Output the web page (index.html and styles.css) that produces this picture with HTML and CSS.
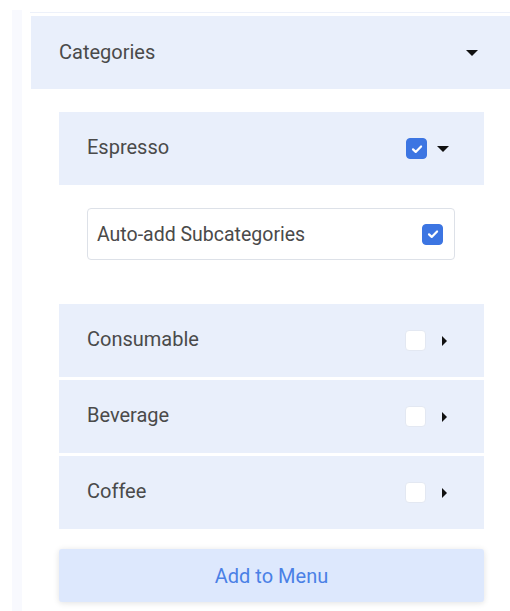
FILE: index.html
```html
<!DOCTYPE html>
<html lang="en">
<head>
    <meta charset="UTF-8">
    <meta name="viewport" content="width=device-width, initial-scale=1.0">
    <title>Categories</title>
    <link rel="stylesheet" href="styles.css">
</head>
<body>
    <div class="page">
        <div class="strip"></div>
        <div class="panel">
            <div class="section-head">
                <span>Categories</span>
                <span class="caret-down"></span>
            </div>
            <div class="section-body">
                <div class="cat-row">
                    <span>Espresso</span>
                    <div class="controls">
                        <span class="check checked"><svg viewBox="0 0 12 12" width="14" height="14"><path d="M2.6 6.3l2.3 2.2 4.6-4.7" fill="none" stroke="#fff" stroke-width="1.9" stroke-linecap="round" stroke-linejoin="round"/></svg></span>
                        <span class="caret-down"></span>
                    </div>
                </div>
                <div class="auto-add">
                    <span>Auto-add Subcategories</span>
                    <span class="check checked"><svg viewBox="0 0 12 12" width="14" height="14"><path d="M2.6 6.3l2.3 2.2 4.6-4.7" fill="none" stroke="#fff" stroke-width="1.9" stroke-linecap="round" stroke-linejoin="round"/></svg></span>
                </div>
                <div class="cat-list">
                    <div class="cat-row">
                        <span>Consumable</span>
                        <div class="controls">
                            <span class="check"></span>
                            <span class="caret-right"></span>
                        </div>
                    </div>
                    <div class="cat-row">
                        <span>Beverage</span>
                        <div class="controls">
                            <span class="check"></span>
                            <span class="caret-right"></span>
                        </div>
                    </div>
                    <div class="cat-row">
                        <span>Coffee</span>
                        <div class="controls">
                            <span class="check"></span>
                            <span class="caret-right"></span>
                        </div>
                    </div>
                </div>
                <button class="add-button">Add to Menu</button>
            </div>
        </div>
    </div>
</body>
</html>
```

FILE: styles.css
```css
body {
    margin: 0;
    background-color: #ffffff;
    font-family: Roboto, "Liberation Sans", sans-serif;
    color: #4a4a4a;
}
.page {
    display: flex;
    padding-top: 10px;
    min-height: 601px;
}
.strip {
    width: 10px;
    margin-left: 12px;
    background-color: #f8f9fe;
}
.panel {
    flex: 1;
    margin-left: 8px;
    margin-top: 2px;
    border-top: 1px solid #edf1fa;
}
.section-head {
    display: flex;
    justify-content: space-between;
    align-items: center;
    height: 73px;
    margin-top: 3px;
    margin-left: 1px;
    padding: 0 32px 0 28px;
    background-color: #e9effb;
    font-size: 20px;
}
.section-head span:first-child {
    margin-top: -2px;
}
.section-body {
    display: flex;
    flex-direction: column;
    padding: 23px 26px 0 29px;
}
.cat-row {
    display: flex;
    justify-content: space-between;
    align-items: center;
    height: 73px;
    padding: 0 35px 0 28px;
    background-color: #e9effb;
    font-size: 20px;
}
.cat-row > span {
    margin-top: -4px;
}
.controls {
    display: flex;
    align-items: center;
    gap: 10px;
}
.check {
    display: flex;
    justify-content: center;
    align-items: center;
    width: 21px;
    height: 21px;
    box-sizing: border-box;
    border-radius: 4px;
    background-color: #ffffff;
    border: 1px solid #e3e8f2;
}
.check.checked {
    background-color: #3c75e2;
    border-color: #3c75e2;
}
.caret-down {
    width: 0;
    height: 0;
    border-left: 6px solid transparent;
    border-right: 6px solid transparent;
    border-top: 6px solid #111;
}
.caret-right {
    width: 0;
    height: 0;
    margin: 0 2px 0 6px;
    border-top: 5px solid transparent;
    border-bottom: 5px solid transparent;
    border-left: 5px solid #111;
}
.auto-add {
    display: flex;
    justify-content: space-between;
    align-items: center;
    width: 368px;
    height: 52px;
    box-sizing: border-box;
    margin: 23px 0 44px 28px;
    padding: 0 11px 0 9px;
    border: 1px solid #dde1e8;
    border-radius: 4px;
    font-size: 19.5px;
}
.cat-list {
    display: flex;
    flex-direction: column;
    gap: 3px;
}
.add-button {
    height: 53px;
    margin-top: 20px;
    border: none;
    border-radius: 3px;
    background-color: #dde8fd;
    color: #4a80e6;
    font-family: inherit;
    font-size: 20px;
    box-shadow: 0 1px 6px rgba(0, 0, 0, 0.12);
}
```
